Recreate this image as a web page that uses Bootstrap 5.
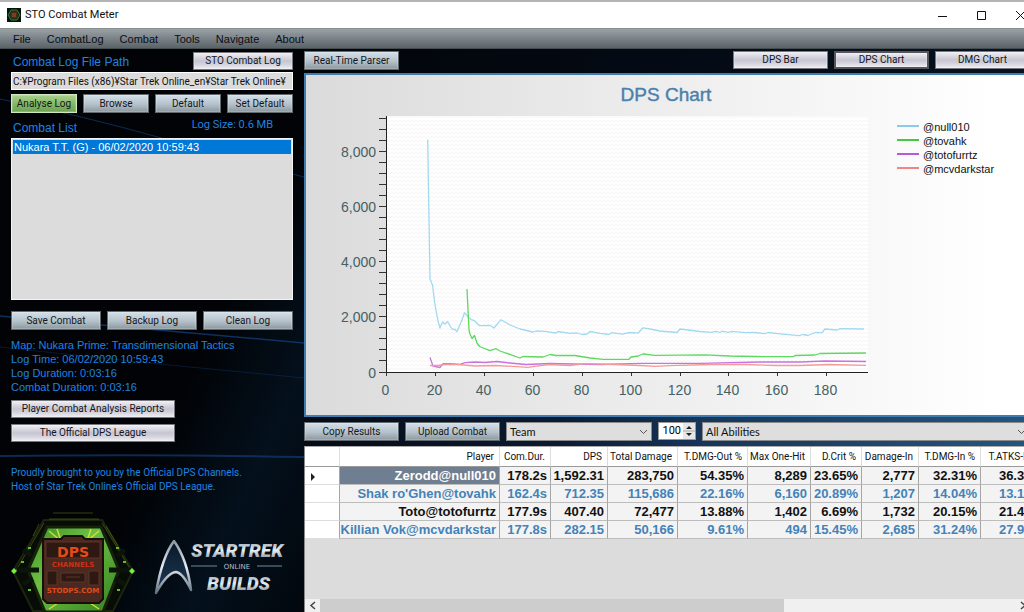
<!DOCTYPE html>
<html lang="en">
<head>
<meta charset="utf-8">
<meta name="viewport" content="width=device-width, initial-scale=1">
<title>STO Combat Meter</title>
<link href="https://cdn.jsdelivr.net/npm/bootstrap@5.3.0/dist/css/bootstrap.min.css" rel="stylesheet">
<style>
:root{--ui:Roboto,"Liberation Sans",sans-serif;--std:"Liberation Sans",Arial,sans-serif}
html,body{height:100%;overflow:hidden}
body{font-family:var(--ui);font-size:11px;line-height:14px;color:#111;background:#02060c}
.window{width:calc(100% + 6px);min-height:100vh;border-top:2px solid #b4b4b4}
.titlebar{height:26px;background:#fff;font-size:11px;padding:0 4px 0 7px}
.caption-btn{border:0;background:none;padding:0;width:11px;height:12px;line-height:0}
.menubar{height:21px;background:linear-gradient(#9aa2a6,#5a6368);border-top:1px solid #878f91;border-bottom:1px solid #444c50;padding-left:13px;font-family:var(--std)}
.menubar a{color:#0c0c14;text-decoration:none}
.side{width:304px;padding:3px 11px 0;position:relative;z-index:0;color:#1f83e0;font-family:var(--std);background:linear-gradient(115deg,#010306 60%,#04101c 80%,#02070d)}
.streaks{position:absolute;inset:0;width:100%;height:100%;z-index:-1}
.gap-btn{gap:6px}
.xbtn{height:19px;padding:0;border:1px solid #62686c;border-radius:0;font:10px/17px var(--ui);color:#14161c;white-space:nowrap;background:linear-gradient(#d3e0e9,#b4c1ca 55%,#8b989f);box-shadow:inset 0 0 0 1px #ffffff30}
.xbtn.silver{height:18px;line-height:16px;background:linear-gradient(#f0eff3,#c6c5d2 50%,#d3d2dc 70%,#efeef2);border-color:#77777d}
.xbtn.green{background:linear-gradient(#a9d08e,#82b765 55%,#6da350);border-color:#cfe8bd}
.xbtn.current{border:2px solid #55555a;line-height:14px}
.w-log{width:100px}
.w-rep{width:164px}
.h-label{font-size:12px;line-height:20px;padding-left:2px}
.path{height:18px;min-height:18px;border:1px solid #fff;border-radius:0;padding:0 1px;background:#dcdcdc;color:#111;font:10px/16px var(--ui)}
.listhead{padding:5px 20px 0 0}
.logsize{font-family:var(--ui)}
.combats{min-height:162px;background:#dcdcdc;border:1px solid #f4f4f4;border-radius:0;padding:1px}
.combats button{border:0;border-radius:0;background:#0078d7;color:#fff;padding:0 1px;font:11px/14px var(--std);text-align:left}
.saverow{margin-top:11px}
.reports{margin-top:6px}
.credit{margin-top:24px;font:10px/14px var(--ui)}
.logos{display:block;overflow:hidden;flex-shrink:0}
.work{min-width:0;background:linear-gradient(100deg,#020509 0%,#040a14 45%,#071524 100%)}
.tools-top{padding:2px 0 3px}
.w-tab{width:95px}
.chart{border:2px solid #3f7db0;background:linear-gradient(90deg,#dbdbdb,#fff 96%);height:344px}
.chart svg{display:block;width:100%;height:100%}
.axis-text{font:14px var(--std);fill:#456065}
.chart-title{font:19px var(--std);fill:#4a80ab;stroke:#4a80ab;stroke-width:.4}
.legend-text{font:11px var(--std);fill:#111}
.tools-mid{padding:5px 0;background:linear-gradient(90deg,#040b15 0,#0b1a33 35%,#17365a 55%,#24567f 100%)}
.combo{height:19px;border:1px solid #8a8a8a;border-radius:0;padding:0 16px 0 3px;font:11px/16px Lato,var(--ui);color:#111;background:#dedede url("data:image/svg+xml,%3Csvg xmlns='http://www.w3.org/2000/svg' width='9' height='6'%3E%3Cpath d='M1 1l3.500 3.500L8 1' fill='none' stroke='%23555'/%3E%3C/svg%3E") no-repeat right 3px center;appearance:none}
.w-team{width:146px}
.spin{width:38px;height:18px;background:#fff;border:1px solid #999}
.spin input{width:22px;border:0;padding:0;text-align:right;font:11px/14px var(--ui);appearance:textfield;background:none}
.spin input::-webkit-inner-spin-button{appearance:none}
.results{background:#dcdcdc;border-left:1px solid #888;border-top:1px solid #aaa}
.grid{table-layout:fixed;width:742px;border-collapse:separate;border-spacing:0;font-family:var(--std)}
.grid th,.grid td{height:18px;padding:0 3px 0 0;text-align:right;white-space:nowrap;border-right:1px solid #a5a5a5;border-bottom:1px solid #bdbdbd;background:#f3f3f3;font-weight:700;font-size:13px;line-height:17px}
.grid thead th{height:20px;background:#fff;font:10px/19px var(--ui);padding-right:5px;border-right-color:#ddd;border-bottom-color:#999}
.grid tbody th:first-child{background:#fff;border-bottom-color:#ddd;text-align:left;padding-left:4px}
.grid tr:nth-child(even) td{color:#4482b8}
.grid tr td.sel{background:#6f7e91;color:#fff}
.scroll{height:13px;background:#f0f0f0}
.thumb{background:#cdcdcd;width:64%}
.scroll button{border:0;padding:0;width:15px;background:#f0f0f0;line-height:0}
</style>
</head>
<body>
<div class="window d-flex flex-column">
  <header class="titlebar d-flex align-items-center gap-1">
    <svg width="14" height="14" aria-hidden="true"><path fill="#07140c" d="M0 0h14v14H0z"/><path d="M4 2h6l3 5-3 5H4L1 7z" fill="#15361c" stroke="#377a35"/><path d="M4 4h6v6H4z" fill="#5a241c"/><path d="M5 6h4M5 8h4" stroke="#a3532f"/></svg>
    <span class="me-auto">STO Combat Meter</span>
    <div class="d-flex gap-4 align-items-center">
      <button class="caption-btn me-1" aria-label="Minimize"><svg width="11" height="11"><path d="M1 6.500h9" stroke="#111"/></svg></button>
      <button class="caption-btn me-1" aria-label="Maximize"><svg width="11" height="11"><path d="M1.500 1.500h8v8h-8z" fill="none" stroke="#111"/></svg></button>
      <button class="caption-btn" aria-label="Close"><svg width="11" height="11"><path d="M1 1l9 9M10 1l-9 9" stroke="#111"/></svg></button>
    </div>
  </header>
  <nav class="menubar d-flex align-items-center gap-3">
    <a href="#">File</a><a href="#">CombatLog</a><a href="#">Combat</a><a href="#">Tools</a><a href="#">Navigate</a><a href="#">About</a>
  </nav>
  <div class="d-flex flex-grow-1">
    <aside class="side flex-shrink-0 d-flex flex-column">
      <svg class="streaks" aria-hidden="true"><g fill="none" stroke="#123c74">
        <path d="M0 50Q80 66 165 90T304 128" opacity=".7"/><path d="M0 267Q150 280 304 294" opacity=".8" stroke-width="1.500"/><path d="M0 298Q150 315 304 329" opacity=".4"/><path d="M0 407Q150 405 304 408" stroke-width="2" opacity=".7"/></g></svg>
      <div class="d-flex justify-content-between">
        <label class="h-label" for="path">Combat Log File Path</label>
        <button class="btn xbtn silver w-log">STO Combat Log</button>
      </div>
      <input id="path" class="form-control path" value="C:¥Program Files (x86)¥Star Trek Online_en¥Star Trek Online¥">
      <div class="d-flex gap-btn mt-1">
        <button class="btn xbtn green col">Analyse Log</button><button class="btn xbtn col">Browse</button><button class="btn xbtn col">Default</button><button class="btn xbtn col">Set Default</button>
      </div>
      <div class="listhead d-flex justify-content-between">
        <span class="h-label">Combat List</span><span class="logsize">Log Size: 0.6 MB</span>
      </div>
      <div class="list-group combats"><button>Nukara T.T. (G) - 06/02/2020 10:59:43</button></div>
      <div class="d-flex gap-btn saverow">
        <button class="btn xbtn col">Save Combat</button><button class="btn xbtn col">Backup Log</button><button class="btn xbtn col">Clean Log</button>
      </div>
      <div class="mt-2">Map: Nukara Prime: Transdimensional Tactics<br>Log Time: 06/02/2020 10:59:43<br>Log Duration: 0:03:16<br>Combat Duration: 0:03:16</div>
      <button class="btn xbtn silver w-rep reports">Player Combat Analysis Reports</button>
      <button class="btn xbtn silver w-rep reports">The Official DPS League</button>
      <p class="credit mb-0">Proudly brought to you by the Official DPS Channels.<br>Host of Star Trek Online's Official DPS League.</p>
      <svg class="logos mt-auto" width="282" height="112" aria-label="DPS Channels, Star Trek Online Builds">
        <defs>
          <linearGradient id="steel" x2="0" y2="1"><stop offset="0" stop-color="#8a97a2"/><stop offset=".5" stop-color="#e8eef2"/><stop offset="1" stop-color="#60717f"/></linearGradient>
          <linearGradient id="navy" x2="0" y2="1"><stop offset="0" stop-color="#0b1827"/><stop offset="1" stop-color="#1d3a58"/></linearGradient>
          <linearGradient id="lime" x2="1" y2="1"><stop offset="0" stop-color="#3b8f22"/><stop offset=".4" stop-color="#6cc043"/><stop offset="1" stop-color="#347f20"/></linearGradient>
        </defs>
        <path d="M33 20h58l31 51-20 40H22L2 71z" fill="#070c07" stroke="#1b250e" stroke-width="2"/>
        <path d="M42 13h40M38 19h50M33 23L4 72M91 23l30 49M28 24l-6 12M95 26l12 20" stroke="#7c8c1c" fill="none" opacity=".45"/>
        <path d="M36 27h54l18 43-16 42H34L17 70z" fill="url(#lime)" stroke="#16210c" stroke-width="3"/>
        <path d="M38 31l12 10M46 29l4 12M88 31l-12 10M80 29l-4 12M38 109l12-8M88 109l-12-8" stroke="#d0df36" stroke-width="1.500"/>
        <path d="M6 70h22M98 70h22M12 50l8 6M114 50l-8 6M12 84l10-5M114 84l-10-5" stroke="#0b130a" stroke-width="5"/>
        <path d="M0 71l3-3 3 3-3 3zM118 71l3-3 3 3-3 3z" fill="#72ef42"/>
        <path d="M10 62h3M112 62h3M17 48h3M105 48h3M17 90h3M106 90h3" stroke="#62bf26" stroke-width="2"/>
        <path d="M32 39h18l3-3h18l3 3h18v60l-4 4H36l-4-4z" fill="#4a2a20" stroke="#1a0e0a" stroke-width="2"/>
        <path d="M35 42h54v16H35zM36 71h10v14H36zM78 71h10v14H78zM50 73h24v9H50zM55 77h14" fill="#2e1812" stroke="#5b3528"/>
        <g text-anchor="middle" font-family="DejaVu Sans" font-weight="700"><text x="62" y="57" font-size="14" fill="#e54b18">DPS</text><text x="62" y="67" font-size="7" fill="#c93016">CHANNELS</text><text x="62" y="93" font-size="7" fill="#e04a1b">STODPS.COM</text></g>
        <path d="M163 41Q151 57 145 93q11-20 20-21 7 1 15 18Q176 59 163 41z" fill="url(#navy)" stroke="url(#steel)" stroke-width="2.500" stroke-linejoin="round"/>
        <g fill="url(#steel)" font-family="Roboto" font-weight="900" font-style="italic"><text x="180" y="57" font-size="19">STARTREK</text><text x="196" y="90" font-size="19">BUILDS</text></g>
        <path d="M180 66h26M246 66h25" stroke="#71899b"/><text x="226" y="69" text-anchor="middle" font-family="DejaVu Sans" font-size="7" fill="#b1bdc8">ONLINE</text>
      </svg>
    </aside>
    <main class="work flex-grow-1 d-flex flex-column">
      <div class="tools-top d-flex gap-btn">
        <button class="btn xbtn w-tab me-auto">Real-Time Parser</button>
        <button class="btn xbtn silver w-tab">DPS Bar</button><button class="btn xbtn silver current w-tab">DPS Chart</button><button class="btn xbtn silver w-tab">DMG Chart</button>
      </div>
      <section class="chart"><svg role="img" aria-label="DPS Chart">
        <defs><pattern id="weave" width="4" height="4" patternUnits="userSpaceOnUse"><path fill="#fff" d="M0 0h4v4H0z"/><path d="M0 0l2 2 2-2" fill="none" stroke="#f5f5f5"/></pattern></defs>
        <g transform="translate(-306 -75)">
          <path d="M387 116h481v256H387z" fill="url(#weave)"/>
          <text class="chart-title" x="666" y="101" text-anchor="middle">DPS Chart</text>
          <g id="axes"></g>
          <path d="M386.500 116v256.500H868" fill="none" stroke="#222"/>
          <g fill="none" stroke-width="1.300" stroke-linejoin="round">
            <polyline stroke="#a2d9f0" points="427.700,139.500 428.500,190 430,279 432.500,285 435,305 438,321 440,328 442.500,322 445,324 447.500,321.700 452,329 455,329.500 457,331.500 462,320 464.500,312.700 468,317 472,320 474,320.300 479.500,325.700 490,325.500 494,328 501,319.700 510,325 520,329 533,332 536,331 545,331.300 556,333 558,331.500 570,333.300 577,333 582,334.500 587,334 590,331.500 600,333.300 609,334.500 611.500,332.700 622,334.200 630,332.500 638,333.200 643,327.800 650,329 660,331 677,332.500 680,329 700,331.500 711,332.300 716,331.300 720,332.500 722,331.200 728,332.300 732,331.300 745,332.700 755,332.500 765,333.700 768,332.500 780,333.800 799,335.700 803,334.500 808,335.500 815,332.500 822,332.700 825,329 837,330 840,328.700 864,329"/>
            <polyline stroke="#5fd85f" points="467,289 469,330 470,334 472,338.500 474.500,335.500 477,343 479.500,346.500 490,350.700 496,348.700 500,351 520,358 523,356.500 543,357 550,354.500 556,355.500 575,355.500 590,358 603,359.300 629,359.300 631,357 638,356 643,354 655,355.300 705,354.800 730,356 755,356.500 793,356.700 795,355.500 815,355 820,353.500 866,353"/>
            <polyline stroke="#c873e0" points="430,357.500 433,366 440,367.500 443,363.700 450,363.700 460,364.300 465,362.700 475,362 485,362.500 497,361.500 510,363 526,364.500 550,363.500 600,364.500 640,363.300 700,363.300 760,362 800,362 825,361 866,361.500"/>
            <polyline stroke="#f59a9a" points="430,365.500 438,365.500 445,364.500 458,364.500 475,366 495,365.500 528,367.300 548,364.500 570,365.500 585,363.700 600,364 640,365.500 655,366.300 670,365.700 710,364.500 745,364.500 775,365.500 800,365.500 828,364.500 866,365.300"/>
          </g>
          <g stroke-width="2"><path d="M897 126h22" stroke="#8ecbea"/><path d="M897 140h22" stroke="#45c945"/><path d="M897 154h22" stroke="#b958d8"/><path d="M897 168h22" stroke="#f08585"/></g>
          <g class="legend-text"><text x="923" y="131">@null010</text><text x="923" y="145">@tovahk</text><text x="923" y="159">@totofurrtz</text><text x="923" y="173">@mcvdarkstar</text></g>
        </g></svg></section>
      <div class="tools-mid d-flex gap-btn">
        <button class="btn xbtn w-tab">Copy Results</button><button class="btn xbtn w-tab">Upload Combat</button>
        <select class="combo w-team" aria-label="Scope"><option>Team</option></select>
        <div class="spin d-flex align-items-center"><input type="number" value="100" aria-label="Percent"><svg class="ms-auto" width="12" height="16"><path d="M0 0h12v16H0z" fill="#e6e6e6"/><path d="M0 8h12" stroke="#aaa"/><path d="M3 6l3-3 3 3zM3 10l3 3 3-3z" fill="#222"/></svg></div>
        <select class="combo flex-grow-1" aria-label="Abilities"><option>All Abilities</option></select>
      </div>
      <section class="results flex-grow-1 d-flex flex-column overflow-hidden">
        <table class="grid">
          <colgroup><col style="width:35px"><col style="width:160px"><col style="width:51px"><col style="width:57px"><col style="width:70px"><col style="width:70px"><col style="width:63px"><col style="width:51px"><col style="width:57px"><col style="width:62px"><col></colgroup>
          <thead><tr><th></th><th>Player</th><th>Com.Dur.</th><th>DPS</th><th>Total Damage</th><th>T.DMG-Out %</th><th>Max One-Hit</th><th>D.Crit %</th><th>Damage-In</th><th>T.DMG-In %</th><th>T.ATKS-In %</th></tr></thead>
          <tbody>
          <tr><th><svg width="8" height="10"><path d="M2 1l4 4-4 4z" fill="#222"/></svg></th><td class="sel">Zerodd@null010</td><td>178.2s</td><td>1,592.31</td><td>283,750</td><td>54.35%</td><td>8,289</td><td>23.65%</td><td>2,777</td><td>32.31%</td><td>36.35%</td></tr>
          <tr><th></th><td>Shak ro'Ghen@tovahk</td><td>162.4s</td><td>712.35</td><td>115,686</td><td>22.16%</td><td>6,160</td><td>20.89%</td><td>1,207</td><td>14.04%</td><td>13.10%</td></tr>
          <tr><th></th><td>Toto@totofurrtz</td><td>177.9s</td><td>407.40</td><td>72,477</td><td>13.88%</td><td>1,402</td><td>6.69%</td><td>1,732</td><td>20.15%</td><td>21.47%</td></tr>
          <tr><th></th><td>Killian Vok@mcvdarkstar</td><td>177.8s</td><td>282.15</td><td>50,166</td><td>9.61%</td><td>494</td><td>15.45%</td><td>2,685</td><td>31.24%</td><td>27.93%</td></tr>
          </tbody>
        </table>
        <div class="scroll d-flex mt-auto">
          <button aria-label="Scroll left"><svg width="8" height="9"><path d="M6 1L2 4.500 6 8" fill="none" stroke="#444" stroke-width="1.500"/></svg></button><div class="thumb"></div><button class="ms-auto" aria-label="Scroll right"><svg width="8" height="9"><path d="M2 1l4 3.500L2 8" fill="none" stroke="#444" stroke-width="1.500"/></svg></button>
        </div>
      </section>
    </main>
  </div>
</div>
<script src="https://cdn.jsdelivr.net/npm/bootstrap@5.3.0/dist/js/bootstrap.bundle.min.js"></script>
<script>
// Axis ticks and labels: 400 DPS per vertical tick, 20 seconds per horizontal tick
let out = '';
for (let v = 0; v <= 9200; v += 400) {
  const y = Math.floor(372 - v * 0.02755) + 0.5;
  out += `<path d="M379 ${y}h7" stroke="#333"/>`;
  if (v % 2000 === 0) out += `<text class="axis-text" x="376" y="${y + 5}" text-anchor="end">${v.toLocaleString('en-US')}</text>`;
}
for (let s = 0; s <= 180; s += 20) {
  const x = Math.round(386 + s * 2.446) + 0.5;
  out += `<path d="M${x} 372v4" stroke="#333"/><text class="axis-text" x="${x - 1}" y="395" text-anchor="middle">${s}</text>`;
}
document.getElementById('axes').innerHTML = out;
</script>
</body>
</html>
